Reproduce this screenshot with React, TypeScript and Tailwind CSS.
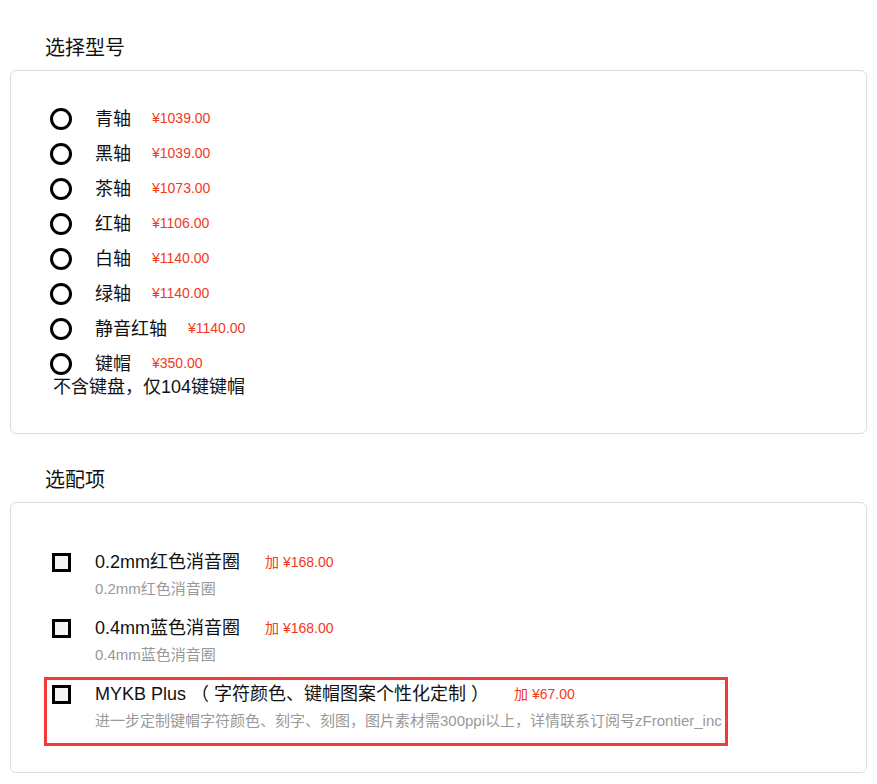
import React from "react";

type Model = {
  name: string;
  price: string;
};

type Extra = {
  name: string;
  price: string;
  desc: string;
  highlight?: boolean;
};

const models: Model[] = [
  { name: "青轴", price: "¥1039.00" },
  { name: "黑轴", price: "¥1039.00" },
  { name: "茶轴", price: "¥1073.00" },
  { name: "红轴", price: "¥1106.00" },
  { name: "白轴", price: "¥1140.00" },
  { name: "绿轴", price: "¥1140.00" },
  { name: "静音红轴", price: "¥1140.00" },
  { name: "键帽", price: "¥350.00" },
];

const extras: Extra[] = [
  { name: "0.2mm红色消音圈", price: "加 ¥168.00", desc: "0.2mm红色消音圈" },
  { name: "0.4mm蓝色消音圈", price: "加 ¥168.00", desc: "0.4mm蓝色消音圈" },
  {
    name: "MYKB Plus （ 字符颜色、键帽图案个性化定制 ）",
    price: "加 ¥67.00",
    desc: "进一步定制键帽字符颜色、刻字、刻图，图片素材需300ppi以上，详情联系订阅号zFrontier_inc",
    highlight: true,
  },
];

const App = () => {
  return (
    <div
      className="px-[10px] pb-[12px] bg-white text-[#111]"
      style={{ fontFamily: '"Liberation Sans", Arial, "Noto Sans CJK SC", sans-serif' }}
    >
      {/* 选择型号 */}
      <h2 className="mt-[26px] pl-[35px] py-[10px] text-[20px] leading-[24px] font-normal">
        选择型号
      </h2>
      <div className="border border-[#dddddd] rounded-[6px] pl-[39px] pt-[30px] pb-[34px]">
        {models.map((m) => (
          <label key={m.name} className="flex items-center h-[35px] cursor-pointer">
            <span className="w-[22px] h-[22px] rounded-full border-[3px] border-black shrink-0" />
            <span className="ml-[23px] text-[18px] leading-[24px]">{m.name}</span>
            <span className="ml-[21px] text-[14px] text-[#f2391c]">{m.price}</span>
          </label>
        ))}
        <div className="-mt-[6px] pl-[3px] text-[18px] leading-[24px]">
          不含键盘，仅104键键帽
        </div>
      </div>

      {/* 选配项 */}
      <h2 className="mt-[24px] pl-[35px] py-[10px] text-[20px] leading-[24px] font-normal">
        选配项
      </h2>
      <div className="border border-[#dddddd] rounded-[6px] pl-[33px] pt-[42px] pb-[26px]">
        {extras.map((e) => (
          <div
            key={e.name}
            className={
              e.highlight
                ? "w-[684px] border-[3px] border-[#f23a3a] pl-[5px] pt-[2px] pb-[12px]"
                : "w-[684px] border-[3px] border-transparent pl-[5px] pt-[2px] pb-[9px]"
            }
          >
            <div className="flex items-center h-[24px]">
              <span className="w-[19px] h-[19px] border-[3px] border-black bg-[#f4f4f4] shrink-0" />
              <span className="ml-[24px] text-[18px] leading-[24px] whitespace-nowrap">{e.name}</span>
              <span className="ml-[25px] text-[14px] text-[#f2391c] whitespace-nowrap">{e.price}</span>
            </div>
            <div className="mt-[5px] pl-[43px] text-[15px] leading-[20px] text-[#999999] whitespace-nowrap">
              {e.desc}
            </div>
          </div>
        ))}
      </div>
    </div>
  );
};

export default App;
